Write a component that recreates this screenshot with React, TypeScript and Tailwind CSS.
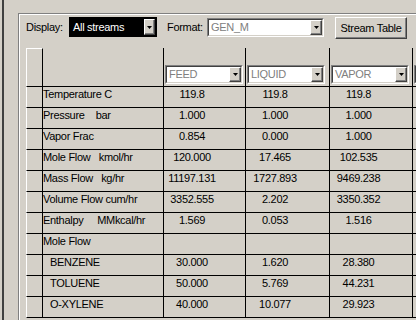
import React from 'react';

type Row = { label: string; indent?: boolean; values: string[] };

const rows: Row[] = [
  { label: 'Temperature C', values: ['119.8', '119.8', '119.8'] },
  { label: 'Pressure    bar', values: ['1.000', '1.000', '1.000'] },
  { label: 'Vapor Frac', values: ['0.854', '0.000', '1.000'] },
  { label: 'Mole Flow   kmol/hr', values: ['120.000', '17.465', '102.535'] },
  { label: 'Mass Flow   kg/hr', values: ['11197.131', '1727.893', '9469.238'] },
  { label: 'Volume Flow cum/hr', values: ['3352.555', '2.202', '3350.352'] },
  { label: 'Enthalpy     MMkcal/hr', values: ['1.569', '0.053', '1.516'] },
  { label: 'Mole Flow', values: ['', '', ''] },
  { label: 'BENZENE', indent: true, values: ['30.000', '1.620', '28.380'] },
  { label: 'TOLUENE', indent: true, values: ['50.000', '5.769', '44.231'] },
  { label: 'O-XYLENE', indent: true, values: ['40.000', '10.077', '29.923'] },
];

const streams = ['FEED', 'LIQUID', 'VAPOR', ''];

const gridCols = 'grid grid-cols-[17px_121px_82px_84px_83px_1fr]';

// little 3d button with the down arrow, as used in every combo box
function DropButton({ className }: { className?: string }) {
  return (
    <div
      className={
        'flex items-center justify-center bg-[#d4d0c8] border border-t-white border-l-white border-b-[#404040] border-r-[#404040] shadow-[inset_-1px_-1px_0_#808080] ' +
        (className ?? '')
      }
    >
      <svg width="5" height="3" viewBox="0 0 5 3">
        <polygon points="0,0 5,0 2.5,3" fill="#000" />
      </svg>
    </div>
  );
}

function ComboBox({ text, className }: { text: string; className?: string }) {
  return (
    <div
      className={
        'border border-t-[#808080] border-l-[#808080] border-b-white border-r-white ' + (className ?? '')
      }
    >
      <div className="h-full flex items-center bg-white border border-t-[#404040] border-l-[#404040] border-b-[#d4d0c8] border-r-[#d4d0c8]">
        <span className="flex-1 pl-[2px] text-[#808080] leading-[13px] whitespace-nowrap overflow-hidden">{text}</span>
        <DropButton className="w-[12px] h-full" />
      </div>
    </div>
  );
}

export default function App() {
  return (
    <div className="w-[416px] h-[320px] overflow-hidden bg-[#d4d0c8] flex font-['Liberation_Sans',Arial,sans-serif] text-[11px] tracking-[-0.3px] text-black">
      <div className="ml-[2px] w-[2px] h-full bg-[#404040] shrink-0" />

      {/* etched frame */}
      <div className="ml-[14px] mt-[13px] flex-1 min-w-0 border-t border-l border-[#808080]">
        <div className="h-full border-t border-l border-white">
          {/* toolbar */}
          <div className="mt-[2px] h-[22px] pl-[6px] flex items-start whitespace-nowrap">
            <div className="w-[43px] h-[20px] flex items-center">Display:</div>
            <div className="w-[88px] h-[20px] bg-black flex items-center shrink-0">
              <span className="flex-1 pl-[4px] text-white">All streams</span>
              <DropButton className="w-[11px] h-[16px] mr-[2px]" />
            </div>
            <div className="ml-[10px] w-[40px] h-[20px] flex items-center">Format:</div>
            <ComboBox text="GEN_M" className="mt-[1px] w-[117px] h-[19px] shrink-0" />
            <button className="ml-[11px] w-[72px] h-[22px] shrink-0 flex items-center justify-center bg-[#d4d0c8] border border-t-white border-l-white border-b-[#404040] border-r-[#404040] shadow-[inset_-1px_-1px_0_#808080]">
              Stream Table
            </button>
          </div>

          {/* stream table */}
          <div className="mt-[9px] ml-[6px]">
            <div className={gridCols + ' h-[39px]'}>
              <div className="border-t border-l border-t-white border-l-white border-r border-b border-r-black border-b-black" />
              <div className="border-r border-b border-black" />
              {streams.map((s, i) => (
                <div key={i} className="border-r border-b border-black flex items-end pb-[2px] pl-[1px]">
                  <ComboBox text={s} className="w-[78px] h-[19px] shrink-0" />
                </div>
              ))}
            </div>

            {rows.map((row) => (
              <div key={row.label} className={gridCols + ' h-[21px]'}>
                <div className="border-l border-l-white border-r border-b border-r-black border-b-black" />
                <div
                  className={
                    'border-r border-b border-black leading-[13px] pt-[1px] whitespace-pre ' +
                    (row.indent ? 'pl-[7px]' : 'pl-0')
                  }
                >
                  {row.label}
                </div>
                {row.values.map((v, i) => (
                  <div key={i} className="border-r border-b border-black leading-[13px] pt-[1px] text-center pr-[25px]">
                    {v}
                  </div>
                ))}
                <div className="border-b border-black" />
              </div>
            ))}
          </div>
        </div>
      </div>
    </div>
  );
}
